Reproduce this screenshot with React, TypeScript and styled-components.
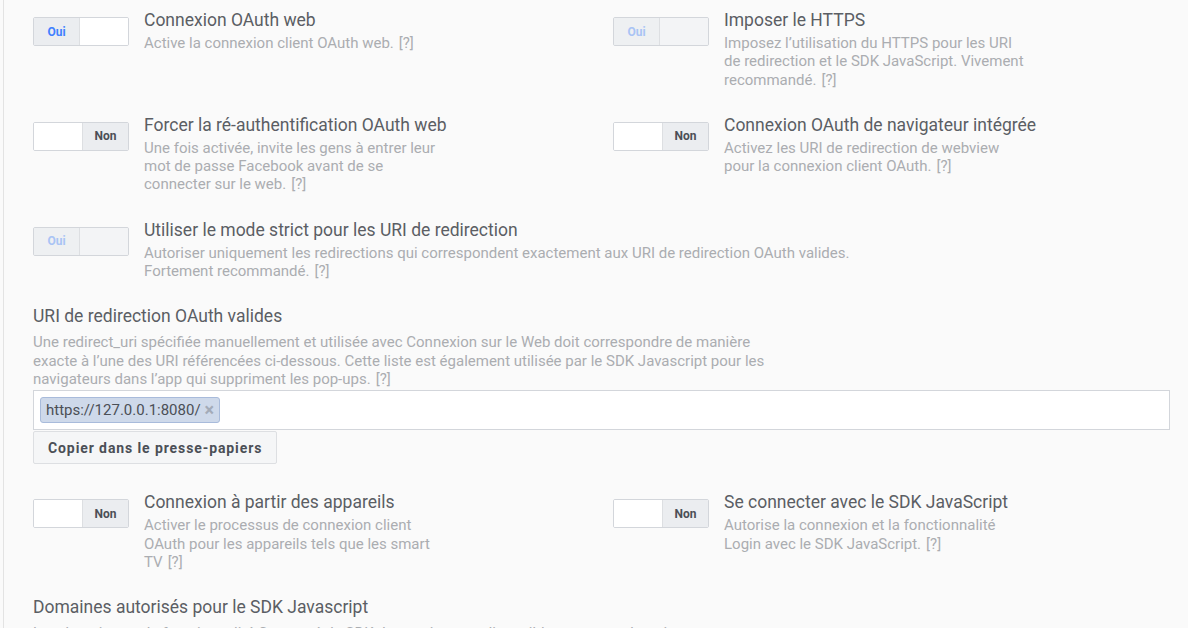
import React from "react";
import styled, { createGlobalStyle } from "styled-components";

const Global = createGlobalStyle`
  html, body { margin: 0; padding: 0; background: #fafafa; }
  body { font-family: Roboto, "Liberation Sans", Arial, sans-serif; overflow: hidden; }
  * { box-sizing: border-box; }
`;

const Page = styled.div`
  margin-left: 3px;
  border-left: 1px solid #e3e3e3;
  background: #fafafa;
  height: 628px;
  overflow: hidden;
  padding: 9px 18px 0 29px;
`;

const Grid = styled.div`
  display: grid;
  grid-template-columns: 580px 1fr;
  row-gap: 25px;
`;

const Row = styled.div<{ $full?: boolean }>`
  display: flex;
  gap: 15px;
  ${(p) => (p.$full ? "grid-column: 1 / -1;" : "")}
`;

const Toggle = styled.div<{ $disabled?: boolean }>`
  flex: none;
  margin-top: 8px;
  width: 96px;
  height: 29px;
  display: flex;
  border: 1px solid #d3d6db;
  border-radius: 2px;
  overflow: hidden;
  background: ${(p) => (p.$disabled ? "#f2f3f5" : "#fff")};
`;

const Seg = styled.div<{ $label?: "oui" | "non"; $disabled?: boolean }>`
  width: ${(p) => (p.$label ? "46px" : "48px")};
  display: flex;
  align-items: center;
  justify-content: center;
  font-size: 12px;
  font-weight: 700;
  background: ${(p) => (p.$label ? (p.$disabled ? "#eef0f2" : "#ebedf0") : p.$disabled ? "#f3f4f6" : "#fff")};
  color: ${(p) => (p.$label === "oui" ? (p.$disabled ? "#a9c4f5" : "#4080ff") : "#4b4f56")};
  ${(p) => (p.$label === "oui" ? "border-right: 1px solid #dddfe2;" : "")}
  ${(p) => (p.$label === "non" ? "border-left: 1px solid #dddfe2;" : "")}
`;

const Text = styled.div`
  min-width: 0;
`;

const Title = styled.div`
  font-size: 17.5px;
  line-height: 22px;
  color: #5b5e64;
  white-space: nowrap;
`;

const Desc = styled.div<{ $gap?: number; $width?: number }>`
  margin-top: ${(p) => p.$gap ?? 3}px;
  max-width: ${(p) => (p.$width ? `${p.$width}px` : "none")};
  font-size: 15px;
  line-height: 18.3px;
  color: #abadb1;
`;

const Help = styled.span`
  padding-left: 5px;
  color: #abadb1;
`;

const Section = styled.div`
  grid-column: 1 / -1;
  display: flex;
  flex-direction: column;
`;

const TagInput = styled.div`
  margin-top: 2px;
  height: 40px;
  border: 1px solid #d3d6db;
  background: #fff;
  display: flex;
  align-items: center;
  padding: 0 6px;
`;

const Tag = styled.span`
  display: inline-flex;
  align-items: center;
  height: 26px;
  padding: 0 5px;
  background: #ced9ea;
  border: 1px solid #a8bbdb;
  border-radius: 3px;
  font-size: 15px;
  color: #4b4f56;
  gap: 4px;
`;

const TagX = styled.span`
  color: #a3abb8;
  font-size: 18px;
  line-height: 1;
  font-weight: 700;
`;

const CopyButton = styled.button`
  align-self: flex-start;
  margin-top: 1px;
  margin-bottom: 2px;
  height: 33px;
  padding: 0 14px;
  background: #f5f6f7;
  border: 1px solid #dddfe2;
  border-radius: 2px;
  font-family: Roboto, "Liberation Sans", Arial, sans-serif;
  font-size: 14px;
  letter-spacing: 0.9px;
  font-weight: 700;
  color: #4b4f56;
`;

type ToggleProps = { on: boolean; disabled?: boolean };
function Switch({ on, disabled }: ToggleProps) {
  return (
    <Toggle $disabled={disabled}>
      {on ? (
        <>
          <Seg $label="oui" $disabled={disabled}>Oui</Seg>
          <Seg $disabled={disabled} />
        </>
      ) : (
        <>
          <Seg $disabled={disabled} />
          <Seg $label="non" $disabled={disabled}>Non</Seg>
        </>
      )}
    </Toggle>
  );
}

type SettingProps = {
  on: boolean;
  disabled?: boolean;
  title: string;
  desc: string;
};
function Setting({ on, disabled, title, desc }: SettingProps) {
  return (
    <Row>
      <Switch on={on} disabled={disabled} />
      <Text>
        <Title>{title}</Title>
        <Desc $width={302}>
          {desc}
          <Help>[?]</Help>
        </Desc>
      </Text>
    </Row>
  );
}

export default function App() {
  return (
    <>
      <Global />
      <Page>
        <Grid>
          <Setting on title="Connexion OAuth web" desc="Active la connexion client OAuth web." />
          <Setting
            on
            disabled
            title="Imposer le HTTPS"
            desc="Imposez l’utilisation du HTTPS pour les URI de redirection et le SDK JavaScript. Vivement recommandé."
          />
          <Setting
            on={false}
            title="Forcer la ré-authentification OAuth web"
            desc="Une fois activée, invite les gens à entrer leur mot de passe Facebook avant de se connecter sur le web."
          />
          <Setting
            on={false}
            title="Connexion OAuth de navigateur intégrée"
            desc="Activez les URI de redirection de webview pour la connexion client OAuth."
          />
          <Row $full>
            <Switch on disabled />
            <Text>
              <Title>Utiliser le mode strict pour les URI de redirection</Title>
              <Desc>
                Autoriser uniquement les redirections qui correspondent exactement aux URI de redirection OAuth valides.
                <br />
                Fortement recommandé.
                <Help>[?]</Help>
              </Desc>
            </Text>
          </Row>
          <Section>
            <Title>URI de redirection OAuth valides</Title>
            <Desc $gap={6} $width={745}>
              Une redirect_uri spécifiée manuellement et utilisée avec Connexion sur le Web doit correspondre de manière
              exacte à l’une des URI référencées ci-dessous. Cette liste est également utilisée par le SDK Javascript pour les
              navigateurs dans l’app qui suppriment les pop-ups.
              <Help>[?]</Help>
            </Desc>
            <TagInput>
              <Tag>
                https://127.0.0.1:8080/
                <TagX>×</TagX>
              </Tag>
            </TagInput>
            <CopyButton>Copier dans le presse-papiers</CopyButton>
          </Section>
          <Setting
            on={false}
            title="Connexion à partir des appareils"
            desc="Activer le processus de connexion client OAuth pour les appareils tels que les smart TV"
          />
          <Setting
            on={false}
            title="Se connecter avec le SDK JavaScript"
            desc="Autorise la connexion et la fonctionnalité Login avec le SDK JavaScript."
          />
          <Section>
            <Title>Domaines autorisés pour le SDK Javascript</Title>
            <Desc $gap={6} $width={745}>
              Les domaines et la fonctionnalité Connecté du SDK Javascript sont disponibles pour ces domaines uniquement.
            </Desc>
          </Section>
        </Grid>
      </Page>
    </>
  );
}
